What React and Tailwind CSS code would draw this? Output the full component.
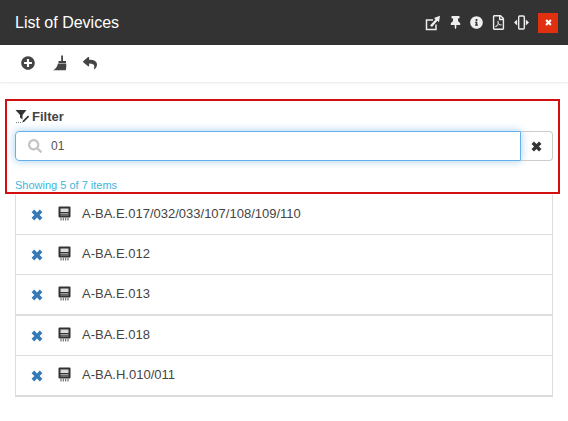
import React from 'react';
import { FaPlusCircle, FaReply, FaThumbtack, FaInfoCircle, FaRegFilePdf, FaSearch } from 'react-icons/fa';

const devices = [
  { name: 'A-BA.E.017/032/033/107/108/109/110', row: 'h-[39px]' },
  { name: 'A-BA.E.012', row: 'h-10 border-t border-[#dddddd]' },
  { name: 'A-BA.E.013', row: 'h-10 border-t border-[#dddddd]' },
  { name: 'A-BA.E.018', row: 'h-[41px] border-t-2 border-[#dddddd]' },
  { name: 'A-BA.H.010/011', row: 'h-10 border-t border-[#dddddd]' },
];

function CrossIcon({ className }) {
  return (
    <svg className={className} width="12" height="12" viewBox="0 0 12 12" fill="currentColor">
      <path d="M3.2.6 6 3.4 8.8.6l2.6 2.6L8.6 6l2.8 2.8-2.6 2.6L6 8.6l-2.8 2.8L.6 8.8 3.4 6 .6 3.2z" />
    </svg>
  );
}

function PopOutIcon() {
  return (
    <svg width="16" height="16" viewBox="0 0 16 16" fill="none">
      <path d="M8 5H1.5v9.5H11V9.5" stroke="currentColor" strokeWidth="1.5" />
      <path d="M5 10.5 10.5 4.6 9 3l6-2.2-1 6.4-1.6-1.4L7 12z" fill="currentColor" />
    </svg>
  );
}

function ResizeIcon() {
  return (
    <svg width="15" height="15" viewBox="0 0 15 15">
      <rect x="4.7" y="1" width="5.6" height="13" rx="1" fill="none" stroke="currentColor" strokeWidth="1.4" />
      <path d="M3.2 4.5v6L0 7.5zM11.8 4.5v6L15 7.5z" fill="currentColor" />
    </svg>
  );
}

function BroomIcon() {
  return (
    <svg width="16" height="16" viewBox="0 0 16 16" fill="currentColor">
      <path d="M9.2 0.5h1.8v5.5H14v2H6.5V6h2.7z" />
      <path d="M6 8.5h8.2c.3 2.8 0 5-.4 6.8H1c2.6-1 4.2-3.5 5-6.8z" />
    </svg>
  );
}

function FilterIcon() {
  return (
    <svg width="15" height="15" viewBox="0 0 15 15">
      <path d="M0.5 1h11L7.5 6v4.5L5 8.5V6z" fill="#333" />
      <path d="M8 11.5l5-5 1.2 1.2-5 5-2 .8z" fill="#333" />
      <path d="M1 13.5h6" stroke="#777" strokeWidth="1" strokeDasharray="1 1" />
    </svg>
  );
}

function MeterIcon() {
  return (
    <svg width="13" height="15" viewBox="0 0 13 15">
      <rect x="0.5" y="0.5" width="12" height="11" rx="1" fill="#333" />
      <rect x="2.5" y="2.5" width="8" height="3.5" fill="#ddd" />
      <path d="M2.5 7.5h8M2.5 9h8" stroke="#bbb" strokeWidth="0.8" />
      <path d="M3 12v2.5M5.3 12v2.5M7.7 12v2.5M10 12v2.5" stroke="#555" strokeWidth="1" />
    </svg>
  );
}

function App() {
  return (
    <div className="w-[568px] h-[421px] bg-white overflow-hidden font-['Liberation_Sans',Arial,sans-serif] text-[#333]">
      <header className="h-[45px] bg-[#333333] flex items-center pl-[15px] pr-[10px] text-white">
        <h1 className="text-[16px] flex-1">List of Devices</h1>
        <div className="flex items-center text-[#eeeeee]">
          <span className="mr-[8px]"><PopOutIcon /></span>
          <FaThumbtack className="text-[13px] mr-[8px]" />
          <FaInfoCircle className="text-[13px] mr-[8px]" />
          <FaRegFilePdf className="text-[15px] mr-[8px]" />
          <span className="mr-[9px]"><ResizeIcon /></span>
          <button className="w-5 h-5 bg-[#e0300f] flex items-center justify-center text-white">
            <CrossIcon className="w-[7px] h-[7px]" />
          </button>
        </div>
      </header>

      <div className="h-[38px] border-b border-[#eeeeee] shadow-[0_1px_3px_rgba(0,0,0,0.04)] flex items-center pl-[21px] pb-[2px] text-[#444]">
        <FaPlusCircle className="text-[14px] mr-[17px]" />
        <span className="mr-[15px]"><BroomIcon /></span>
        <FaReply className="text-[14px]" />
      </div>

      <section className="ml-[5px] mt-[16px] w-[555px] h-[95px] border-2 border-[#d40f0f] pl-[8px] pr-[5px] pt-[7px]">
        <div className="flex items-center gap-[2px] h-[17px] text-[13px] font-bold text-[#444]">
          <FilterIcon />
          <span>Filter</span>
        </div>
        <div className="flex mt-[6px] h-[30px]">
          <div className="flex-1 flex items-center rounded-l-[4px] border border-[#66afe9] shadow-[0_0_8px_rgba(102,175,233,0.6)] pl-[12px]">
            <FaSearch className="text-[14px] text-[#c4c4c4] mr-[9px]" />
            <span className="text-[12px] text-[#555]">01</span>
          </div>
          <button className="w-[32px] flex items-center justify-center border border-l-0 border-[#cccccc] rounded-r-[4px] text-[#333]">
            <CrossIcon className="w-[11px] h-[11px]" />
          </button>
        </div>
        <p className="mt-[17px] text-[11px] leading-[14px] text-[#41b5dc]">Showing 5 of 7 items</p>
      </section>

      <ul className="ml-[15px] mt-[1px] w-[538px] border border-t-0 border-b-2 border-[#dddddd]">
        {devices.map((d) => (
          <li key={d.name} className={`${d.row} flex items-center pl-[15px] pb-[2px]`}>
            <CrossIcon className="text-[#337ab7] mr-[15px] mt-[2px]" />
            <span className="mr-[11px]"><MeterIcon /></span>
            <span className="text-[13px] text-[#444]">{d.name}</span>
          </li>
        ))}
      </ul>
    </div>
  );
}

export default App;
